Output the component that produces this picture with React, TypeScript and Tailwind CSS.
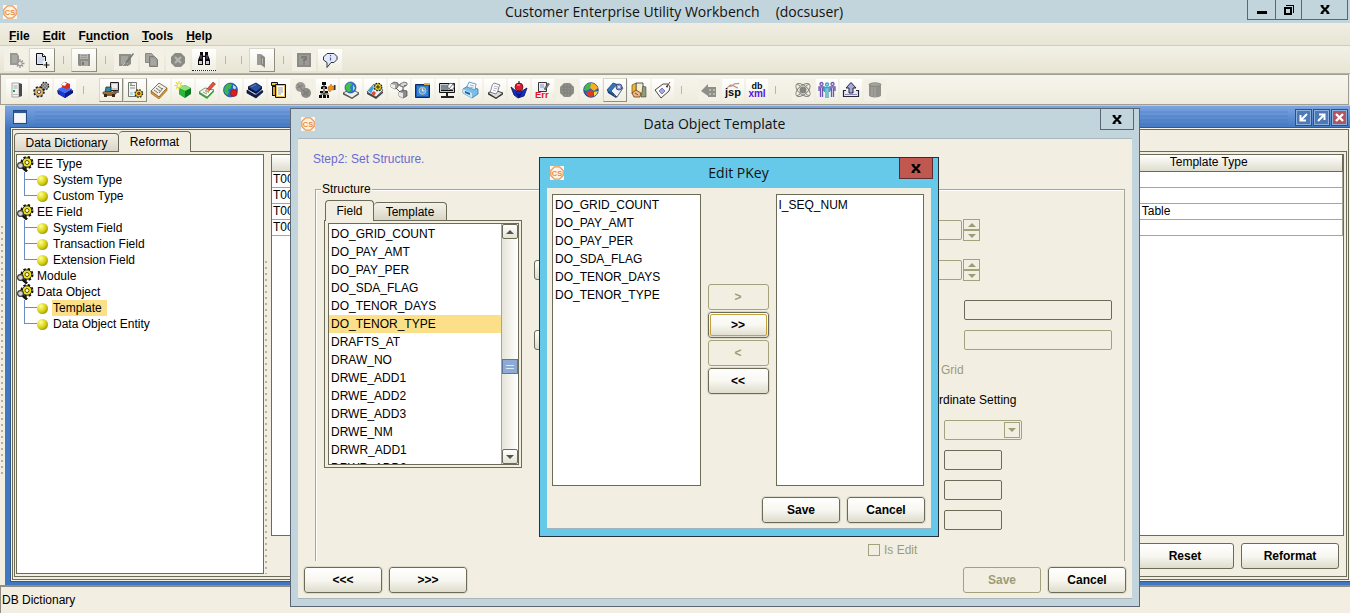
import React from "react";

/* ---------- icon primitives ---------- */

type Kids = { children?: React.ReactNode };

function Ico({ children }: Kids) {
  return (
    <svg viewBox="0 0 18 18" className="size-[18px]" aria-hidden="true">
      {children}
    </svg>
  );
}

function Gear({ x, y, r, fill, hole = "#fff" }: { x: number; y: number; r: number; fill: string; hole?: string }) {
  return (
    <g>
      <circle cx={x} cy={y} r={r} fill="none" stroke="#111" strokeWidth={r * 0.5} strokeDasharray={`${r * 0.42} ${r * 0.365}`} />
      <circle cx={x} cy={y} r={r - 0.2} fill={fill} stroke="#222" strokeWidth="0.5" />
      <circle cx={x} cy={y} r={r * 0.38} fill={hole} stroke="#222" strokeWidth="0.7" />
    </g>
  );
}

function CsLogo() {
  return (
    <svg viewBox="0 0 14 14" className="size-[14px]" aria-hidden="true">
      <rect width="14" height="14" fill="#fdf6ee" />
      <path d="M4.500 .8h5l3.700 3.700v5l-3.700 3.700h-5L.8 9.500v-5z" fill="#fff4e6" stroke="#ee9a55" strokeWidth="1.300" />
      <text x="7" y="9.800" textAnchor="middle" fontFamily="Liberation Sans, sans-serif" fontWeight="bold" fontSize="7.500" fill="#ec8c3c">CS</text>
    </svg>
  );
}

/* ---------- first toolbar icons ---------- */

const NewDocGrey = (
  <Ico>
    <path d="M3 2h7l2 3v9H3z" fill="#989892" />
    <path d="M5 4h5v8H5z" fill="#aaaaa4" />
    <path d="M13 8v9M8.500 12.500h9M10 9.500l6 6M16 9.500l-6 6" stroke="#989892" strokeWidth="1.400" />
    <circle cx="13" cy="12.500" r="1.500" fill="#eee" />
  </Ico>
);
const AddDoc = (
  <Ico>
    <path d="M3.500 2.500h6l3 3v8h-9z" fill="#dfe5f6" stroke="#111" strokeWidth="1" />
    <path d="M9.500 2.500v3h3" fill="#fff" stroke="#111" />
    <path d="M5 7h6M5 9h6M5 11h5" stroke="#aab4d8" strokeWidth=".6" />
    <rect x="10" y="10" width="7" height="7" fill="#f4f3ea" />
    <path d="M13.500 11v6M10.500 14h6" stroke="#111" strokeWidth="1.200" />
  </Ico>
);
const SaveGrey = (
  <Ico>
    <path d="M3 3h12v12H4l-1-1z" fill="#8d8d87" />
    <path d="M5 3h8v5H5z" fill="#b5b5ae" />
    <path d="M6 4.500h6M6 6.500h6" stroke="#92928c" strokeWidth=".8" />
    <path d="M6 10h7v5H6z" fill="#a9a9a3" />
    <path d="M7 11h2v3H7z" fill="#77776f" />
  </Ico>
);
const EditGrey = (
  <Ico>
    <path d="M2 3h12v10l-3 2H2z" fill="#8f8f89" />
    <path d="M4 5h7v8H4z" fill="#a5a59f" />
    <path d="M16 2 9 10l-1 4 3-3 6-8z" fill="#7a7a74" />
    <path d="M8 12 5 15" stroke="#c5c5be" />
  </Ico>
);
const CopyGrey = (
  <Ico>
    <path d="M2.500 2.500h6l2 2v7h-8z" fill="#a5a59f" stroke="#8a8a84" />
    <path d="M6.500 5.500h5l3 3v7h-8z" fill="#9c9c96" stroke="#7c7c76" />
    <path d="M8 9h4M8 11h5M8 13h5" stroke="#babab3" strokeWidth=".8" />
  </Ico>
);
const StopGrey = (
  <Ico>
    <path d="M6 2h6l4 4v6l-4 4H6l-4-4V6z" fill="#8b8b85" />
    <path d="m6 6 6 6M12 6l-6 6" stroke="#b8b8b1" strokeWidth="2" />
  </Ico>
);
const Binoculars = (
  <Ico>
    <path d="M5 2h3v3l.5 1h1L10 5V2h3v3l2 5v5h-5V9H8v6H3v-5l2-5z" fill="#0c0c10" />
    <rect x="4" y="11" width="3" height="3" fill="#c8ccd8" />
    <rect x="11" y="11" width="3" height="3" fill="#c8ccd8" />
    <path d="M6 5v4M12 5v4" stroke="#747484" />
    <rect x="8" y="7" width="2" height="2" fill="#fff" />
  </Ico>
);
const DoorGrey = (
  <Ico>
    <path d="M4 3h4l4 3v11l-4-3H4z" fill="#9c9c96" />
    <path d="M8 4l4 3v9l-4-3z" fill="#85857f" />
    <path d="M9.500 7v6" stroke="#b8b8b1" />
  </Ico>
);
const HelpGrey = (
  <Ico>
    <rect x="2" y="2" width="14" height="14" fill="#8c8c86" />
    <rect x="4" y="4" width="10" height="10" fill="#9b9b95" />
    <path d="M7 7.500V6h4v2.500H9V11M9 12v1.500" fill="none" stroke="#73736d" strokeWidth="1.400" />
  </Ico>
);
const Bubble = (
  <Ico>
    <path d="M6 2.500h7l3 3v3l-3 3h-3l-4 5v-5l-3.500-2.500v-3z" fill="#e3e9f8" stroke="#33333b" strokeWidth="1" />
    <path d="M9.500 4v1.200M9.500 6.500v3" stroke="#4a5fb0" strokeWidth="1.200" />
  </Ico>
);

/* ---------- second toolbar icons ---------- */

const Server = (
  <Ico>
    <path d="M4 2h7v14H4z" fill="#f2f2f2" stroke="#888" strokeWidth=".7" />
    <path d="M11 2l3 1v12l-3 1z" fill="#4a4a4a" />
    <path d="M5.500 5h4M5.500 7h4" stroke="#aaa" />
    <rect x="5" y="9" width="2" height="2" fill="#1ca53c" />
    <path d="M5 13.500h5" stroke="#bbb" />
  </Ico>
);
const Gears = (
  <Ico>
    <Gear x={13} y={5} r={3.400} fill="#b5b5b5" />
    <Gear x={7} y={10.800} r={4.600} fill="#dfb56c" hole="#f7f5ec" />
  </Ico>
);
const BlueCube = (
  <Ico>
    <path d="m1 9 8 4 8-4v3l-8 5-7-4z" fill="#101060" />
    <path d="m2 8 6-3 8 3-7 4z" fill="#3d6fff" />
    <path d="m2 8 7 4v5l-6-4z" fill="#1738d8" />
    <path d="m9 12 7-4-1 5-6 4z" fill="#0b1c94" />
    <path d="M6 4 9 1l5 2v4l-4 1-4-2z" fill="#e0281c" />
    <path d="m5 4 3-3 3 1-2 3z" fill="#fff" stroke="#888" strokeWidth=".4" />
  </Ico>
);
const Workstation = (
  <Ico>
    <path d="M8.500 1.500h8v8h-8z" fill="#c9c9c9" stroke="#222" />
    <path d="M10 3h5v4h-5z" fill="#eee" />
    <path d="M11 10h6v2h-6z" fill="#777" />
    <path d="M4 6h5v5H3z" fill="#2a8ca6" stroke="#123" strokeWidth=".7" />
    <path d="M1 11h13v2H1z" fill="#c48a4c" stroke="#3b2410" strokeWidth=".6" />
    <path d="M2 13h3v3H2zM10 13h3v3h-3z" fill="#3b2410" />
    <path d="M5 13h5v2H5z" fill="#8e5b2c" />
  </Ico>
);
const ServerGear = (
  <Ico>
    <path d="M2.500 1.500h8v14h-8z" fill="#f4f4f4" stroke="#555" strokeWidth=".8" />
    <path d="M4 4.500h5M4 7h5" stroke="#8a8a8a" />
    <rect x="4" y="2.500" width="2" height="1" fill="#1ca53c" />
    <path d="M4 11h3v3H4z" fill="#bdd" />
    <Gear x={12.800} y={12.500} r={3.500} fill="#ffd61c" hole="#d03018" />
  </Ico>
);
const Ledger = (
  <Ico>
    <path d="m1 10 8-8 8 5-8 9z" fill="#f1efe6" stroke="#55524a" strokeWidth=".8" />
    <path d="m1 10 8 6 8-9v2.500L9 18l-8-5.500z" fill="#e49a30" stroke="#7b4c0c" strokeWidth=".5" />
    <path d="m4 9 4 3M6 7l4 3M8 5l4 3M9 12l4-5" stroke="#66645c" strokeWidth=".9" />
  </Ico>
);
const GreenCube = (
  <Ico>
    <path d="m5 7 6-3 6 3v6l-6 4-6-4z" fill="#0c7a1c" />
    <path d="m5 7 6-3 6 3-6 3z" fill="#8de07c" />
    <path d="m5 7 6 3v7l-6-4z" fill="#2bb53a" />
    <path d="M5 0v9M.5 4.500h9M2 1.500l6 6M8 1.500l-6 6" stroke="#e6d820" strokeWidth="1.100" />
    <circle cx="5" cy="4.500" r="1.400" fill="#fffbd0" />
  </Ico>
);
const PencilPaper = (
  <Ico>
    <path d="m1 11 6-4 9 2-7 7z" fill="#f7f7f0" stroke="#4d5a48" strokeWidth=".7" />
    <path d="m1 11 8 5 7-7v1.800L9 18l-8-5z" fill="#39a03c" />
    <path d="m5 11 4 2M7 9.500l4 2" stroke="#49a24a" strokeWidth=".8" />
    <path d="m8 11 1-3 6-7 2.500 2L11 10z" fill="#e2523c" stroke="#6d1d14" strokeWidth=".5" />
    <path d="m8 11 1-3 2 2z" fill="#f5d9a8" />
  </Ico>
);
const GlobeRed = (
  <Ico>
    <circle cx="8.500" cy="9" r="7" fill="#2369d8" stroke="#123a6b" strokeWidth=".6" />
    <path d="M4 4.500C6 2 9 2.500 10 4L8 8 6 8.500 7 12l-2 2C2 12 1 8 4 4.500z" fill="#3cb84a" />
    <path d="M11 4l3 2-1 3-2-2z" fill="#bfe4f5" />
    <circle cx="11.800" cy="12" r="3.400" fill="#dc1e1e" stroke="#7c0c0c" strokeWidth=".5" />
  </Ico>
);
const Books = (
  <Ico>
    <path d="m2 6 8-4 6 4-6 5z" fill="#2450a8" stroke="#050b28" strokeWidth=".8" />
    <path d="m2 6 8 5 6-5v2l-6 5-8-4.500z" fill="#060f30" />
    <path d="m1 9 8 5 7-5 1 2-7 6-9-5z" fill="#0a1c5c" stroke="#020614" strokeWidth=".7" />
    <path d="m3 9.500 7 4 6-4.500" stroke="#9fb6e6" strokeWidth=".7" fill="none" />
    <path d="m5 6 5-2.500" stroke="#6c94e0" strokeWidth=".8" />
  </Ico>
);
const Clipboards = (
  <Ico>
    <path d="M1.500 1.500h6v3h-6z" fill="#f4c828" stroke="#111" />
    <path d="M2 5h4v10H2z" fill="#111" />
    <path d="M3 6h2v8H3z" fill="#d8a828" />
    <path d="M5.500 3.500h10v13h-10z" fill="#e6c050" stroke="#111" />
    <path d="M7 5h7v10H7z" fill="#fff" />
    <path d="M8 7h5M8 9h5M8 11h5M8 13h3" stroke="#888" strokeWidth=".8" />
  </Ico>
);
const ChainGrey = (
  <Ico>
    <circle cx="6.500" cy="6" r="5" fill="#9b9b95" />
    <circle cx="12" cy="12" r="5" fill="#8c8c86" />
    <path d="M4 3l4 6M3 7l6-3M9 9l5 6M9 14l6-4" stroke="#74746e" strokeWidth=".8" />
  </Ico>
);
const OrgHand = (
  <Ico>
    <path d="M4 1h4v3H4zM3 6h2v2H3zM7 6h2v2H7zM2 10h3v2H2zM7 10h3v2H7zM1 14h3v3H1zM5 14h3v3H5zM9 14h2v3H9z" fill="#0b0b0b" />
    <path d="M6 3v12M3.500 5.500h5M2.500 13h8" stroke="#0b0b0b" strokeWidth=".9" />
    <path d="m10 6 2-1 1-2 1 2h2v4h-3l-1 2-2-2z" fill="#eb9220" stroke="#8a4d05" strokeWidth=".4" />
    <path d="M16 4h1.500v5H16z" fill="#333" />
  </Ico>
);
const GlobeDrive = (
  <Ico>
    <path d="m1 12 8-4 8 4-7 5z" fill="#eeeeea" stroke="#222" strokeWidth=".7" />
    <path d="m1 12 9 5 7-5v1.500L10 18l-9-4.500z" fill="#555" />
    <circle cx="8.500" cy="6.500" r="5.500" fill="#2978dc" stroke="#103060" strokeWidth=".6" />
    <path d="M5 3c2-2 4-1 5 0L8 6l1 4-3 1C3 8 3 5 5 3z" fill="#46c048" />
    <path d="M11 4l2 3-2 3z" fill="#f2e050" />
  </Ico>
);
const DriveGear = (
  <Ico>
    <path d="m1 11 7-8 9 6-7 7z" fill="#e9eef2" stroke="#333" strokeWidth=".7" />
    <path d="m1 11 9 5 7-6v2l-7 6-9-5z" fill="#444" />
    <path d="m2 10 4-5 2 2-3 5z" fill="#34a4e0" />
    <path d="m5 12 3-2 2 2-2 3z" fill="#e04b38" />
    <Gear x={12} y={6} r={3.500} fill="#f5e020" hole="#8a7400" />
  </Ico>
);
const Nodes = (
  <Ico>
    <path d="M3 4h9M4 5l8 8M13 4v9" stroke="#444" strokeWidth=".9" />
    <path d="m1 3 3-2 4 1v4L5 8 1 6z" fill="#a9a9a9" stroke="#333" strokeWidth=".6" />
    <path d="m1 3 4 1v4L1 6z" fill="#eee" />
    <path d="m10 3 4-2 3 1v2l-3 2-4-1z" fill="#d8d8d8" stroke="#333" strokeWidth=".6" />
    <path d="m9 11 4-2 4 1v5l-4 2-4-2z" fill="#8c8c8c" stroke="#333" strokeWidth=".6" />
    <path d="m9 11 4 1v5l-4-2z" fill="#e8e8e8" />
    <path d="M14 4h2v1h-2z" fill="#c43" />
  </Ico>
);
const ClockFolder = (
  <Ico>
    <path d="M1.500 3.500h14v13h-14z" fill="#1c5cb4" stroke="#0c2c60" />
    <path d="M10 2h6v2h-6z" fill="#e0b050" />
    <path d="M3 5h11v10H3z" fill="#3683d8" />
    <circle cx="8.500" cy="9.800" r="3.400" fill="#5b9fe2" stroke="#f0d060" strokeWidth=".9" />
    <path d="M8.500 7.500v2.500h2" fill="none" stroke="#fff" strokeWidth=".9" />
  </Ico>
);
const MonitorDish = (
  <Ico>
    <path d="M1.500 2.500h15v9h-15z" fill="#c8ccd0" stroke="#111" />
    <path d="M3 4h7v6H3z" fill="#7c8a96" />
    <circle cx="13" cy="5.500" r="3.200" fill="#fff" stroke="#444" strokeWidth=".7" />
    <path d="m11 8 4-5" stroke="#444" strokeWidth=".7" />
    <path d="M8 12h2v3H8zM3 15h13v2H3z" fill="#222" />
    <path d="M3 9.500h12" stroke="#111" />
  </Ico>
);
const Printer = (
  <Ico>
    <path d="m1 8 5-3 10 3v5l-6 4-9-5z" fill="#79bde8" stroke="#2a6a9a" strokeWidth=".7" />
    <path d="m5 6 2-5 7 2-1 6z" fill="#f5fbff" stroke="#3d7faf" strokeWidth=".7" />
    <path d="m1 8 9 4v5l-9-5z" fill="#c5e4f7" />
    <path d="m3 10 5 2v2l-5-2z" fill="#225f90" />
    <path d="M8 4l4 1M7.500 6l4 1" stroke="#78a8c8" strokeWidth=".8" />
  </Ico>
);
const PaperScan = (
  <Ico>
    <path d="m2 12 6-3 9 3-7 5z" fill="#dcdcdc" stroke="#222" strokeWidth=".8" />
    <path d="m2 12 8 5 7-5v1.500L10 18l-8-4.500z" fill="#333" />
    <path d="M4 11c2-3 1-7 4-9l6 2c-2 2-1 6-4 9z" fill="#fff" stroke="#555" strokeWidth=".7" />
    <path d="m8 5 4 1M7.500 7l4 1M7 9l3 1" stroke="#8c98c8" strokeWidth=".7" />
  </Ico>
);
const BowlBall = (
  <Ico>
    <path d="M1 6l5 4h6l5-3-3 8-6 2-4-3z" fill="#1430c8" stroke="#050c50" strokeWidth=".8" />
    <path d="m5 11 4 2 4-2-4 6z" fill="#0a1780" />
    <circle cx="9" cy="6" r="4" fill="#d8202c" stroke="#5c0610" strokeWidth=".7" />
    <path d="M7 4h3" stroke="#ff9c9c" strokeWidth="1.200" />
    <path d="M9 0v3" stroke="#111" />
  </Ico>
);
const ErrDoc = (
  <Ico>
    <path d="M4.500 1.500h8v9h-8z" fill="#e8ecf8" stroke="#222" strokeWidth=".9" />
    <path d="M6 4h4M6 6h4" stroke="#6974a8" strokeWidth=".8" />
    <path d="m10 8 4-6 1.500 1-4 6z" fill="#777" stroke="#222" strokeWidth=".4" />
    <text x="1" y="17" fontFamily="Liberation Sans, sans-serif" fontWeight="bold" fontSize="9.500" fill="#ee1224">Err</text>
  </Ico>
);
const GlobeGrey = (
  <Ico>
    <path d="M6 2h6l4 4v6l-4 4H6l-4-4V6z" fill="#91918b" />
    <path d="M3 6h12M2 9h14M3 12h12M6 3v12M9 2v14M12 3v12" stroke="#7c7c76" strokeWidth=".7" />
  </Ico>
);
const GlobeColor = (
  <Ico>
    <circle cx="9" cy="9" r="7.300" fill="#2360d0" stroke="#1d2c50" strokeWidth=".7" />
    <path d="M3 5c2-3 5-3 6-3l-1 6-4 2-2-1z" fill="#45b648" />
    <path d="M9 2c4 0 6 3 7 5l-4 3-4-3z" fill="#f2b21c" />
    <path d="m6 10 4-1 2 3-2 4c-3 0-5-2-6-4z" fill="#dd3b1c" />
    <path d="m12 11 4-1-2 4-2 1z" fill="#f2e048" />
  </Ico>
);
const BookLens = (
  <Ico>
    <path d="m1 9 6-7 6 2-5 10z" fill="#2f76c4" stroke="#12345c" strokeWidth=".7" />
    <path d="m5 10 6-7 6 4-6 9z" fill="#eff4fb" stroke="#2c3c58" strokeWidth=".8" />
    <path d="m1 9 7 5 3 2-1 1-8-5z" fill="#16407c" />
    <circle cx="13" cy="6" r="3" fill="#8c9bd4" stroke="#37447c" strokeWidth=".9" />
    <circle cx="13" cy="6" r="1" fill="#fff" />
  </Ico>
);
const DocHand = (
  <Ico>
    <path d="M6 2h7v11H6z" fill="#f4eecb" stroke="#333" strokeWidth=".8" />
    <path d="M2 4l4-2v9l-4 2z" fill="#e8b838" stroke="#553c08" strokeWidth=".6" />
    <path d="m13 5 3 1v10h-5z" fill="#8ca078" stroke="#333" strokeWidth=".5" />
    <path d="M2 12l4-3 5 3-1 4H4z" fill="#edb685" stroke="#6e3b14" strokeWidth=".8" />
    <path d="m5 12 3 2" stroke="#6e3b14" strokeWidth=".8" />
  </Ico>
);
const Tag = (
  <Ico>
    <path d="m1 9 8-6h5l2 3-1 4-8 7z" fill="#fafafa" stroke="#333" strokeWidth=".9" />
    <path d="m5 10 3-3 3 3-3 3z" fill="#a8a4dc" stroke="#6a64b4" strokeWidth=".8" />
    <path d="M13 5l3-4" stroke="#a43c3c" strokeWidth="1" />
    <circle cx="13" cy="5.500" r="1" fill="#333" />
  </Ico>
);
const BackCardGrey = (
  <Ico>
    <path d="m1 10 7-7v3h8v10H8v-1z" fill="#8f8f89" />
    <path d="M9 8h6v2H9zM9 12h6v2H9z" fill="#b6b6af" />
    <path d="M11 9h2M11 13h2" stroke="#74746e" />
  </Ico>
);
const Jsp = (
  <Ico>
    <path d="M3 7c2-3 4 0 6-3s4 0 6-2M5 5c3-3 5 1 9 2" fill="none" stroke="#b89088" strokeWidth="1.100" />
    <text x="9" y="14.500" textAnchor="middle" fontFamily="Liberation Sans, sans-serif" fontWeight="bold" fontSize="11" fill="#0a0a0a">jsp</text>
  </Ico>
);
const DbXml = (
  <Ico>
    <text x="9" y="7.500" textAnchor="middle" fontFamily="Liberation Sans, sans-serif" fontWeight="bold" fontSize="9" fill="#0a0a0a">db</text>
    <text x="9" y="16" textAnchor="middle" fontFamily="Liberation Sans, sans-serif" fontWeight="bold" fontSize="10" fill="#5a10e0">xml</text>
  </Ico>
);
const AtomGrey = (
  <Ico>
    <g fill="none" stroke="#868680" strokeWidth="1">
      <ellipse cx="9" cy="9" rx="8.500" ry="4.500" transform="rotate(40 9 9)" />
      <ellipse cx="9" cy="9" rx="8.500" ry="4.500" transform="rotate(-40 9 9)" />
      <path d="M3 3l3 2M15 3l-3 2M3 15l3-2M15 15l-3-2" />
    </g>
    <circle cx="9" cy="9" r="3.500" fill="#85857f" />
  </Ico>
);
const People = (
  <Ico>
    <g fill="none" stroke="#6d55b4" strokeWidth="1.300">
      <circle cx="3.500" cy="3" r="1.500" />
      <circle cx="14.500" cy="3" r="1.500" />
      <path d="M1 10V6h5v4M2.500 7v9M4.500 7v9M12 10V6h5v4M13.500 7v9M15.500 7v9" />
    </g>
    <g fill="none" stroke="#36a8c4" strokeWidth="1.300">
      <circle cx="9" cy="3.500" r="1.500" fill="#bce8f0" />
      <path d="M6.500 11V6.500h5V11M8 7v10M10 7v10" />
    </g>
  </Ico>
);
const Upload = (
  <Ico>
    <path d="M4 9.500H1.500v6h15v-6H14" fill="#e8e8f4" stroke="#25253c" strokeWidth="1.200" />
    <path d="M9 1.500 4 7h3v5h4V7h3z" fill="#a5a9dc" stroke="#25253c" strokeWidth="1" />
    <path d="M3 13.500h12" stroke="#8c8cb4" />
  </Ico>
);
const TrashGrey = (
  <Ico>
    <path d="M3 3.500C4 1 14 1 15 3.500v11c-1 2.500-11 2.500-12 0z" fill="#92928c" />
    <path d="M6 6v9M9 6v10" stroke="#adada6" />
    <ellipse cx="9" cy="3.500" rx="6" ry="1.700" fill="#a6a69f" stroke="#7d7d77" strokeWidth=".6" />
  </Ico>
);

/* ---------- toolbars ---------- */

type Tool = { icon: React.ReactNode; label: string; kind?: "raised" | "off" | "focus" };

const toolGroupsA: Tool[][] = [
  [{ icon: NewDocGrey, label: "New", kind: "off" }, { icon: AddDoc, label: "Add", kind: "raised" }],
  [{ icon: SaveGrey, label: "Save", kind: "raised" }],
  [
    { icon: EditGrey, label: "Edit", kind: "off" },
    { icon: CopyGrey, label: "Copy", kind: "off" },
    { icon: StopGrey, label: "Delete", kind: "off" },
    { icon: Binoculars, label: "Find", kind: "focus" },
  ],
  [],
  [{ icon: DoorGrey, label: "Exit", kind: "raised" }],
  [{ icon: HelpGrey, label: "Contents", kind: "off" }, { icon: Bubble, label: "About" }],
];

const toolGroupsB: Tool[][] = [
  [{ icon: Server, label: "Server" }, { icon: Gears, label: "Settings" }, { icon: BlueCube, label: "Module" }],
  [
    { icon: Workstation, label: "Workstation", kind: "raised" },
    { icon: ServerGear, label: "Server setup", kind: "raised" },
    { icon: Ledger, label: "Ledger" },
    { icon: GreenCube, label: "New module" },
    { icon: PencilPaper, label: "Notes" },
    { icon: GlobeRed, label: "Site" },
    { icon: Books, label: "Library" },
    { icon: Clipboards, label: "Clipboard" },
    { icon: ChainGrey, label: "Link", kind: "off" },
    { icon: OrgHand, label: "Hierarchy" },
    { icon: GlobeDrive, label: "Publish" },
    { icon: DriveGear, label: "Build" },
    { icon: Nodes, label: "Nodes" },
    { icon: ClockFolder, label: "Schedule" },
    { icon: MonitorDish, label: "Monitor" },
    { icon: Printer, label: "Print" },
    { icon: PaperScan, label: "Scan" },
    { icon: BowlBall, label: "Package" },
    { icon: ErrDoc, label: "Errors" },
    { icon: GlobeGrey, label: "Network", kind: "off" },
    { icon: GlobeColor, label: "World" },
    { icon: BookLens, label: "Dictionary", kind: "raised" },
    { icon: DocHand, label: "Hand over" },
    { icon: Tag, label: "Tag" },
  ],
  [{ icon: BackCardGrey, label: "Back", kind: "off" }, { icon: Jsp, label: "JSP" }, { icon: DbXml, label: "DB XML" }],
  [
    { icon: AtomGrey, label: "Atom", kind: "off" },
    { icon: People, label: "Users" },
    { icon: Upload, label: "Upload" },
    { icon: TrashGrey, label: "Trash", kind: "off" },
  ],
];

const toolLook = {
  plain: "m-px bg-linear-to-b from-white to-[#f0eee0]",
  off: "m-px bg-[#f3f1e6]",
  raised: "border border-t-[#d8d6c8] border-l-[#d8d6c8] border-r-[#8f8d80] border-b-[#8f8d80] bg-linear-to-b from-white to-[#f0eee0]",
  focus: "m-px border-b border-dotted border-[#222] bg-linear-to-b from-white to-[#f0eee0]",
};

function ToolRow({ groups, wide }: { groups: Tool[][]; wide?: boolean }) {
  return (
    <div className="flex items-center">
      {groups.map((g, i) => (
        <React.Fragment key={i}>
          {i > 0 && (
            <div className={wide ? "flex w-4 justify-center" : "flex w-[22px] pl-1.5"}>
              <div className="h-2 w-px bg-[#b9b7aa]" />
            </div>
          )}
          {g.map((t) => (
            <div key={t.label} className={wide ? "flex h-6 w-[26px]" : "flex h-6 w-6"}>
              <button
                type="button"
                aria-label={t.label}
                disabled={t.kind === "off"}
                className={`flex flex-1 items-center justify-center ${toolLook[t.kind ?? "plain"]}`}
              >
                {t.icon}
              </button>
            </div>
          ))}
        </React.Fragment>
      ))}
    </div>
  );
}

/* ---------- shared controls ---------- */

function Btn({ children, disabled, focused, narrow }: Kids & { disabled?: boolean; focused?: boolean; narrow?: boolean }) {
  return (
    <button
      type="button"
      disabled={disabled}
      className={`h-[26px] rounded-[3px] border font-bold ${narrow ? "w-[61px]" : "w-[78px]"} ${
        disabled
          ? "border-[#a3a27d] text-[#9c9b76]"
          : "border-[#6b6b58] bg-linear-to-b from-white via-[#f8f7f1] to-[#dedccc] text-black outline outline-[#dcdacb]"
      } ${focused ? "p-px" : ""}`}
    >
      {focused ? (
        <span className="flex h-full items-center justify-center rounded-xs border border-[#c5a23c]">{children}</span>
      ) : (
        children
      )}
    </button>
  );
}

function CloseX() {
  return (
    <svg viewBox="0 0 10 9" className="h-[9px] w-[10px]" aria-hidden="true">
      <path d="M1.500 1 8.500 8M8.500 1 1.500 8" stroke="#000" strokeWidth="2.200" />
      <path d="M.5 .7h3M6.500 .7h3M.5 8.300h3M6.500 8.300h3" stroke="#000" strokeWidth="1.200" />
    </svg>
  );
}

const TITLE = "font-['Open_Sans','Noto_Sans',sans-serif] text-sm text-[#111]";

/* ---------- tree ---------- */

const tree = [
  { name: "EE Type", items: ["System Type", "Custom Type"] },
  { name: "EE Field", items: ["System Field", "Transaction Field", "Extension Field"] },
  { name: "Module", items: [] },
  { name: "Data Object", items: ["Template", "Data Object Entity"] },
];

function TreeGear() {
  return (
    <svg viewBox="0 0 17 16" className="h-4 w-[17px]" aria-hidden="true">
      <circle cx="10" cy="6.500" r="5" fill="none" stroke="#111" strokeWidth="3" strokeDasharray="2.200 1.730" />
      <circle cx="10" cy="6.500" r="4.700" fill="#f4e60c" stroke="#222" strokeWidth="1" />
      <circle cx="10" cy="6.500" r="2" fill="#fffbd0" stroke="#555200" strokeWidth="1" />
      <path d="m5 11 5 4.500" stroke="#111" strokeWidth="2.600" />
      <circle cx="3.500" cy="9.500" r="2.900" fill="#cfd4d8" stroke="#333" strokeWidth="1.100" />
    </svg>
  );
}

function TreeView() {
  return (
    <ul className="pt-px">
      {tree.map((g) => (
        <li key={g.name}>
          <div className="flex h-4 items-center gap-[3px]">
            <TreeGear />
            <span>{g.name}</span>
          </div>
          <ul>
            {g.items.map((it, i) => (
              <li key={it} className="flex h-4 items-center pl-[7px]">
                <div className="flex h-4 w-[13px] flex-col">
                  <div className="h-2 w-full border-b border-l border-[#6a8fbe]" />
                  <div className={i < g.items.length - 1 ? "flex-1 border-l border-[#6a8fbe]" : "flex-1"} />
                </div>
                <div className="size-[11px] rounded-full bg-radial-[at_35%_30%] from-[#ffff9c] via-[#d8d00c] to-[#6c6800]" />
                <span className={`ml-1 flex h-4 items-center px-px ${it === "Template" ? "bg-[#fbdf89] pr-[5px]" : ""}`}>{it}</span>
              </li>
            ))}
          </ul>
        </li>
      ))}
    </ul>
  );
}

/* ---------- dialogs ---------- */

const fields = [
  "DO_GRID_COUNT", "DO_PAY_AMT", "DO_PAY_PER", "DO_SDA_FLAG", "DO_TENOR_DAYS", "DO_TENOR_TYPE", "DRAFTS_AT",
  "DRAW_NO", "DRWE_ADD1", "DRWE_ADD2", "DRWE_ADD3", "DRWE_NM", "DRWR_ADD1", "DRWR_ADD2",
];

function ListBox({ label, items, selected }: { label: string; items: string[]; selected?: string }) {
  return (
    <ul role="listbox" aria-label={label} className="min-w-0 flex-1 overflow-hidden bg-white pt-px">
      {items.map((f) => (
        <li
          key={f}
          role="option"
          aria-selected={f === selected}
          className={`flex h-[18px] items-center pl-0.5 ${f === selected ? "bg-[#fbdf89]" : ""}`}
        >
          {f}
        </li>
      ))}
    </ul>
  );
}

function Arrow({ up, color }: { up?: boolean; color: string }) {
  return (
    <svg viewBox="0 0 8 4" className="h-1 w-2" aria-hidden="true">
      <path d={up ? "M0 4h8L4 0z" : "M0 0h8L4 4z"} fill={color} />
    </svg>
  );
}

function ScrollBar() {
  const knob = "flex h-[15px] items-center justify-center rounded-xs border border-[#6b6b58] bg-linear-to-b from-white to-[#e4e2d4]";
  return (
    <div className="flex w-[17px] flex-col border-l border-[#a6a698] bg-linear-to-r from-[#e6e4d8] to-white">
      <button type="button" aria-label="Scroll up" className={knob}>
        <Arrow up color="#55554a" />
      </button>
      <div className="flex flex-1 flex-col">
        <div className="flex-[121]" />
        <div className="flex h-[15px] flex-col items-center justify-center gap-0.5 border border-[#5c74a0] bg-[#8caad4]">
          <div className="h-px w-2 bg-[#dbe6f6]" />
          <div className="h-px w-2 bg-[#dbe6f6]" />
        </div>
        <div className="flex-[75]" />
      </div>
      <button type="button" aria-label="Scroll down" className={knob}>
        <Arrow color="#55554a" />
      </button>
    </div>
  );
}

function Spinner({ label }: { label: string }) {
  return (
    <div className="flex h-10 items-center gap-px">
      <input type="text" aria-label={label} disabled className="h-5 w-[94px] rounded-xs border border-[#a3a27d] px-1" />
      <div className="flex flex-col">
        <button type="button" aria-label={`${label} up`} disabled className="flex h-[11px] w-[17px] items-center justify-center border border-[#a3a27d]">
          <Arrow up color="#9c9b76" />
        </button>
        <button type="button" aria-label={`${label} down`} disabled className="flex h-[11px] w-[17px] items-center justify-center border border-[#a3a27d]">
          <Arrow color="#9c9b76" />
        </button>
      </div>
    </div>
  );
}

function TemplateDialog() {
  return (
    <section
      aria-label="Data Object Template"
      className="absolute top-[108px] left-[290px] flex h-[499px] w-[850px] flex-col border border-[#5d6472] bg-[#c3d5dc]"
    >
      <header className="flex h-[29px] items-start">
        <div className="flex h-full w-[38px] items-center pl-2.5">
          <CsLogo />
        </div>
        <h2 className={`flex h-full flex-1 items-center justify-center ${TITLE}`}>Data Object Template</h2>
        <button type="button" aria-label="Close template window" className="mr-[5px] flex h-[21px] w-[34px] items-center justify-center border border-t-0 border-[#5d6472]">
          <CloseX />
        </button>
      </header>
      <div className="mx-[7px] mb-[7px] flex flex-1 flex-col border-y border-[#a9b7bd] bg-[#f2efe2]">
        <p className="mt-3 ml-[15px] h-4 text-[#6a6ad2]">Step2: Set Structure.</p>
        <fieldset className="mt-[15px] mr-[7px] ml-[17px] h-[379px] border border-b-0 border-[#a6a698] shadow-[inset_1px_1px_0_#fff]">
          <legend className="ml-[5px] h-[14px] bg-[#f2efe2] px-px leading-[14px]">Structure</legend>
          <div className="flex">
            <div className="ml-2 flex w-[198px] flex-col pt-1">
              <div className="flex items-end" role="tablist">
                <button type="button" role="tab" aria-selected="true" className="z-10 -mb-px ml-px h-[21px] w-[49px] rounded-t-sm border border-b-0 border-[#6b6b58] bg-[#f2efe2]">
                  Field
                </button>
                <button type="button" role="tab" aria-selected="false" className="h-[18px] w-[73px] rounded-t-sm border border-b-0 border-l-0 border-[#6b6b58] bg-linear-to-b from-[#f4f2e8] to-[#d9d6c8]">
                  Template
                </button>
              </div>
              <div className="flex h-[248px] border border-[#6b6b58] p-0.5 pl-[3px]">
                <div className="flex min-h-0 flex-1 border border-[#6b6b58]">
                  <ListBox label="Fields" items={fields} selected="DO_TENOR_TYPE" />
                  <ScrollBar />
                </div>
              </div>
            </div>
            <div className="ml-3 flex flex-col gap-[50px] pt-16">
              <button type="button" aria-label="Add field" className="h-5 w-10 rounded-[3px] border border-[#6b6b58] bg-linear-to-b from-white to-[#dedccc]" />
              <button type="button" aria-label="Remove field" className="h-5 w-10 rounded-[3px] border border-[#6b6b58] bg-linear-to-b from-white to-[#dedccc]" />
            </div>
            <div className="ml-[294px] flex flex-col pt-[14px] text-[#9c9b76]">
              <Spinner label="Rows" />
              <Spinner label="Columns" />
              <div className="mt-[5px] flex h-[30px] items-center pl-24">
                <input type="text" aria-label="Name" className="h-5 w-[148px] rounded-xs border border-[#6b6b58] px-1" />
              </div>
              <div className="flex h-[30px] items-center pl-24">
                <input type="text" aria-label="Description" disabled className="h-5 w-[148px] rounded-xs border border-[#a3a27d] px-1" />
              </div>
              <div className="flex h-[30px] items-center pl-[73px]">Grid</div>
              <div className="flex h-[30px] items-center pl-[49px] text-black">Coordinate Setting</div>
              <div className="flex h-[30px] items-center pl-19">
                <div className="flex h-5 w-[78px] items-center rounded-xs border border-[#a3a27d] pr-px">
                  <select aria-label="Alignment" disabled className="h-full min-w-0 flex-1 appearance-none" />
                  <div className="flex size-4 items-center justify-center border border-[#a3a27d]">
                    <Arrow color="#9c9b76" />
                  </div>
                </div>
              </div>
              {["X", "Y", "Width"].map((n) => (
                <div key={n} className="flex h-[30px] items-center pl-19">
                  <input type="text" aria-label={n} className="h-5 w-[58px] rounded-xs border border-[#6b6b58] px-1" />
                </div>
              ))}
              <label className="flex h-[30px] items-center gap-1">
                <input type="checkbox" disabled className="size-3 appearance-none border border-[#a3a27d]" />
                Is Edit
              </label>
            </div>
          </div>
        </fieldset>
        <div className="mt-1.5 flex gap-[7px] px-1.5">
          <Btn>&lt;&lt;&lt;</Btn>
          <Btn>&gt;&gt;&gt;</Btn>
          <div className="flex-1" />
          <Btn disabled>Save</Btn>
          <Btn>Cancel</Btn>
        </div>
      </div>
    </section>
  );
}

function PKeyDialog() {
  return (
    <section
      aria-label="Edit PKey"
      className="absolute top-[157px] left-[539px] flex h-[380px] w-[400px] flex-col border border-[#2b2f36] bg-[#66c9ea]"
    >
      <header className="flex h-[29px] items-start">
        <div className="flex h-full w-[38px] items-center pl-2.5">
          <CsLogo />
        </div>
        <h2 className={`flex h-full flex-1 items-center justify-center ${TITLE}`}>Edit PKey</h2>
        <button type="button" aria-label="Close key window" className="mr-[5px] flex h-[21px] w-[34px] items-center justify-center border border-t-0 border-[#5d2c30] bg-[#c1584f]">
          <CloseX />
        </button>
      </header>
      <div className="mx-[7px] mb-[7px] flex flex-1 flex-col border-y border-[#9db4bc] bg-[#f2efe2] pt-1.5 pr-1.5 pl-[5px]">
        <div className="flex h-[292px] gap-[7px] pr-px">
          <div className="flex flex-1 border border-[#6b6b58]">
            <ListBox label="Available keys" items={fields.slice(0, 6)} />
          </div>
          <div className="flex flex-col gap-0.5 pt-[90px]">
            <Btn narrow disabled>&gt;</Btn>
            <Btn narrow focused>&gt;&gt;</Btn>
            <Btn narrow disabled>&lt;</Btn>
            <Btn narrow>&lt;&lt;</Btn>
          </div>
          <div className="flex flex-1 border border-[#6b6b58]">
            <ListBox label="Selected keys" items={["I_SEQ_NUM"]} />
          </div>
        </div>
        <div className="mt-[11px] flex justify-end gap-[7px]">
          <Btn>Save</Btn>
          <Btn>Cancel</Btn>
        </div>
      </div>
    </section>
  );
}

/* ---------- desktop frame ---------- */

const rows = [
  ["T001", "", "", ""],
  ["T002", "", "", ""],
  ["T003", "", "", "Transaction Table"],
  ["T004", "", "", ""],
];

function FrameIcons() {
  const box = "flex size-[15px] items-center justify-center border border-[#8fb0dd] outline outline-[#2b4f8c]";
  return (
    <div className="flex gap-[3px] pr-[3px]">
      <button type="button" aria-label="Minimise frame" className={`${box} bg-[#4f79b3]`}>
        <svg viewBox="0 0 9 9" className="size-[9px]"><path d="M8 1 2.500 6.500M1.500 2v5.500H7" fill="none" stroke="#fff" strokeWidth="2" /></svg>
      </button>
      <button type="button" aria-label="Maximise frame" className={`${box} bg-[#4f79b3]`}>
        <svg viewBox="0 0 9 9" className="size-[9px]"><path d="M1 8 6.500 2.500M2 1.500h5.500V7" fill="none" stroke="#fff" strokeWidth="2" /></svg>
      </button>
      <button type="button" aria-label="Close frame" className={`${box} bg-[#b05560]`}>
        <svg viewBox="0 0 9 9" className="size-[9px]"><path d="m1 1 7 7M8 1 1 8" stroke="#fff" strokeWidth="2.400" /></svg>
      </button>
    </div>
  );
}

function DesktopFrame() {
  return (
    <section aria-label="Dictionary" className="flex min-w-0 flex-1 flex-col border-t border-[#b8cbe8] bg-[#4178c2]">
      <header className="flex h-[22px] items-center gap-2 bg-linear-to-b from-[#7ba5e0] to-[#4478c2] pl-2">
        <svg viewBox="0 0 14 14" className="size-[14px]" aria-hidden="true">
          <rect x=".5" y=".5" width="13" height="13" fill="#e6e9ee" stroke="#234a86" />
          <rect x="1" y="1" width="12" height="2" fill="#34588c" />
          <rect x="2" y="4" width="10" height="8" fill="#fff" opacity=".6" />
        </svg>
        <div className="h-4 flex-1 bg-[repeating-linear-gradient(transparent_0_2px,#3868b430_2px_4px)]" />
        <FrameIcons />
      </header>
      <div className="mb-1 ml-1.5 flex flex-1 flex-col border border-[#f6f4ea] bg-[#f2efe2] outline outline-[#34588c]">
        <div className="flex flex-1 flex-col border border-[#6b6b58] px-px pt-px pb-0.5">
          <div className="flex items-end" role="tablist">
            <button type="button" role="tab" aria-selected="false" className="h-[18px] w-[105px] rounded-t-sm border border-b-0 border-[#6b6b58] bg-linear-to-b from-[#f4f2e8] to-[#d9d6c8]">
              Data Dictionary
            </button>
            <button type="button" role="tab" aria-selected="true" className="z-10 -mb-px h-[21px] w-[72px] rounded-t-sm border border-b-0 border-l-0 border-[#6b6b58] bg-[#f2efe2]">
              Reformat
            </button>
          </div>
          <div className="flex flex-1 border border-[#6b6b58] px-px pt-0.5 pb-0.5">
            <div className="w-[248px] border border-[#6b6b58] bg-white">
              <TreeView />
            </div>
            <div className="mt-[106px] w-[7px] bg-[radial-gradient(circle_at_2px_2px,#b4b2a4_1px,transparent_1px)] bg-size-[7px_6px]" />
            <div className="flex min-w-0 flex-1 flex-col">
              <div className="mr-px h-[382px] border border-[#6b6b58] bg-white">
                <table className="w-full table-fixed border-collapse">
                  <thead>
                    <tr className="h-4">
                      {["", "", "", "Template Type"].map((h, i) => (
                        <th key={i} scope="col" className="border-b border-r border-[#6b6b58] bg-linear-to-b from-white to-[#dedccc] p-0 text-xs leading-[15px] font-normal">
                          {h}
                        </th>
                      ))}
                    </tr>
                  </thead>
                  <tbody>
                    {rows.map((r) => (
                      <tr key={r[0]} className="h-4">
                        {r.map((c, i) => (
                          <td key={i} className="border-r border-b border-[#a6a698] p-0 pl-px leading-[15px]">
                            {c}
                          </td>
                        ))}
                      </tr>
                    ))}
                  </tbody>
                </table>
              </div>
              <div className="mt-[7px] flex justify-end gap-[7px] pr-1.5">
                <button type="button" className="h-[26px] w-[98px] rounded-[3px] border border-[#6b6b58] bg-linear-to-b from-white via-[#f8f7f1] to-[#dedccc] font-bold">Reset</button>
                <button type="button" className="h-[26px] w-[98px] rounded-[3px] border border-[#6b6b58] bg-linear-to-b from-white via-[#f8f7f1] to-[#dedccc] font-bold">Reformat</button>
              </div>
            </div>
          </div>
        </div>
      </div>
    </section>
  );
}

/* ---------- page ---------- */

export default function App() {
  return (
    <div className="relative flex min-h-screen flex-col overflow-hidden bg-[#f2efe2] font-['Liberation_Sans',Arial,sans-serif] text-xs text-black">
      <header className="flex h-[23px] items-start bg-[#c3d5dc] pr-0.5 pl-[3px]">
        <div className="flex h-full w-[98px] items-center">
          <CsLogo />
        </div>
        <h1 className={`flex h-full flex-1 items-center justify-center gap-4 ${TITLE}`}>
          <span>Customer Enterprise Utility Workbench</span>
          <span>(docsuser)</span>
        </h1>
        <div className="flex h-5 border border-t-0 border-[#5d6472]">
          <button type="button" aria-label="Minimise" className="flex w-7 items-center justify-center border-r border-[#5d6472]">
            <svg viewBox="0 0 10 9" className="h-[9px] w-[10px]"><path d="M0 6h10v3H0z" /></svg>
          </button>
          <button type="button" aria-label="Restore" className="flex w-[26px] items-center justify-center border-r border-[#5d6472]">
            <svg viewBox="0 0 10 10" className="size-[10px]" shapeRendering="crispEdges"><path d="M0 2h8v8H0zM2 4v4h4V4z" fillRule="evenodd" /><path d="M2 0h8v8H9V1H2z" /></svg>
          </button>
          <button type="button" aria-label="Close" className="flex w-[45px] items-center justify-center">
            <CloseX />
          </button>
        </div>
      </header>

      <nav className="flex h-[23px] items-center gap-[13px] border-b border-[#cfcdbf] bg-linear-to-b from-[#f0eee2] to-[#e8e5d5] pt-[3px] pl-[9px] font-bold">
        {["File", "Edit", "Function", "Tools", "Help"].map((m) => (
          <button type="button" key={m} className="leading-4">
            {m === "Function" ? <>F<u>u</u>nction</> : <><u>{m[0]}</u>{m.slice(1)}</>}
          </button>
        ))}
      </nav>

      <div className="flex h-7 items-center border-b border-[#b4b2a6] bg-linear-to-b from-[#f3f1e6] to-[#e8e5d5] pl-[3px]">
        <ToolRow groups={toolGroupsA} wide />
      </div>
      <div className="mr-px flex h-[31px] items-center border border-[#a09e94] bg-linear-to-b from-[#f7f5ec] to-[#eeebdd] pl-1">
        <ToolRow groups={toolGroupsB} />
      </div>

      <main className="flex flex-1">
        <div className="w-[5px] bg-[radial-gradient(circle_at_2px_2px,#b4b2a4_1px,transparent_1px)] bg-size-[5px_6px] bg-clip-content pt-[120px] pb-[110px]" />
        <DesktopFrame />
      </main>

      <footer className="flex h-[28px] items-center border-t-2 border-l border-[#8f8d84] pl-px">DB Dictionary</footer>
      <div className="h-0.5 bg-white" />

      <TemplateDialog />
      <PKeyDialog />
    </div>
  );
}
